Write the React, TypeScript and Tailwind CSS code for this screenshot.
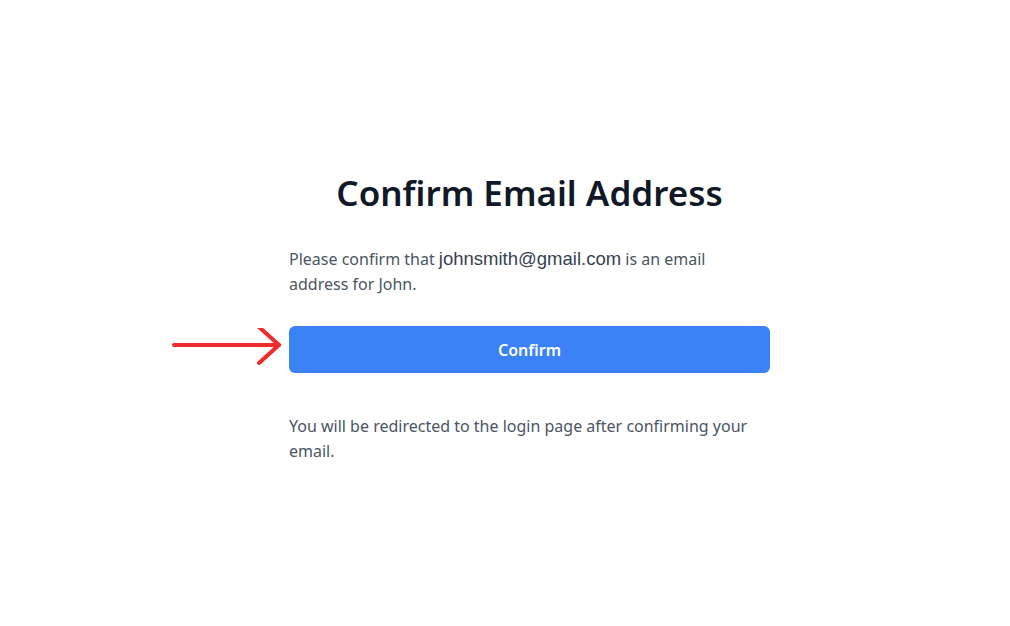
export default function App() {
  return (
    <div className="min-h-[626px] w-full bg-white font-['Noto_Sans',sans-serif]">
      <div className="ml-[289px] w-[481px] pt-[171px]">
        {/* Title */}
        <h1 className="text-center text-[35px] font-semibold leading-[44px] text-[#111827]">
          Confirm Email Address
        </h1>

        {/* Message */}
        <p className="mt-[31px] w-[440px] text-[16px] leading-[25px] text-[#4b5563]">
          Please confirm that{' '}
          <span className="font-['Liberation_Sans',Arial,sans-serif] text-[18.5px] text-[#374151]">
            johnsmith@gmail.com
          </span>{' '}
          is an email address for John.
        </p>

        {/* Confirm button with pointer arrow */}
        <div className="relative mt-[29px]">
          <svg
            className="absolute left-[-118px] top-[2px]"
            width="112"
            height="40"
            viewBox="0 0 112 40"
            fill="none"
            stroke="#ef2b2b"
            strokeWidth="4"
            strokeLinecap="round"
            strokeLinejoin="round"
          >
            <path d="M3 17 H108" />
            <path d="M88 -1 L108 17 L88 35" />
          </svg>
          <button className="h-[47px] w-full rounded-md bg-[#3b82f6] text-[16px] font-semibold text-white">
            Confirm
          </button>
        </div>

        {/* Footer note */}
        <p className="mt-[41px] text-[16px] leading-[25px] text-[#4b5563]">
          You will be redirected to the login page after confirming your email.
        </p>
      </div>
    </div>
  )
}
